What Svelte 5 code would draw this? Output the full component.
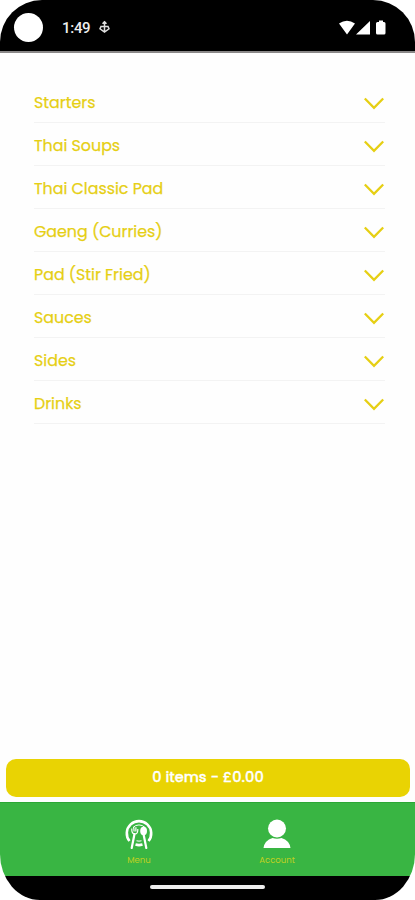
<script>
	const categories = [
		'Starters',
		'Thai Soups',
		'Thai Classic Pad',
		'Gaeng (Curries)',
		'Pad (Stir Fried)',
		'Sauces',
		'Sides',
		'Drinks'
	];

	let items = 0;
	let total = 0;
</script>

<style>
	:global(body) {
		background: #fff;
	}

	.phone {
		display: flex;
		flex-direction: column;
		box-sizing: border-box;
		width: 415px;
		height: 900px;
		overflow: hidden;
		border-radius: 42px 42px 40px 40px / 42px 42px 46px 46px;
		background: #fefefe;
		font-family: Poppins, Inter, sans-serif;
	}

	.status {
		display: flex;
		align-items: center;
		box-sizing: border-box;
		height: 53px;
		padding: 3px 28px 0 14px;
		border-bottom: 2px solid #8a8888;
		background: #000;
		color: #eee;
	}

	.camera {
		width: 29px;
		height: 29px;
		border-radius: 50%;
		background: #fff;
	}

	.time {
		width: 28px;
		margin: 2px 9px 0 19px;
		font: 500 15px Roboto, sans-serif;
		letter-spacing: -0.3px;
	}

	.signals {
		margin-left: auto;
	}

	svg {
		display: block;
	}

	ul {
		flex: 1;
		margin: 0;
		padding: 27px 30px 0 34px;
		list-style: none;
	}

	li {
		display: flex;
		align-items: center;
		justify-content: space-between;
		box-sizing: border-box;
		height: 43px;
		border-bottom: 1px solid #f3f3f3;
		color: #e6cf14;
		font-size: 15.85px;
		-webkit-text-stroke: 0.25px #e6cf14;
	}

	li span {
		padding-top: 2px;
	}

	li svg {
		margin: 5px 1px 0 0;
	}

	.basket {
		height: 38px;
		margin: 0 5px 5px 6px;
		padding: 0 0 1px;
		border: 0;
		border-radius: 10px;
		background: #e9d303;
		color: #fff;
		font: 500 14.6px Poppins, Inter, sans-serif;
		text-align: center;
		-webkit-text-stroke: 0.3px #fff;
	}

	nav {
		display: flex;
		box-sizing: border-box;
		height: 74px;
		padding: 16px 69px 0 70px;
		border-top: 1px solid #2ba735;
		background: #39b543;
		color: #bfd022;
		font-size: 8.5px;
	}

	.tab {
		display: flex;
		flex: 1;
		flex-direction: column;
		align-items: center;
	}

	.tab span {
		margin-top: 6px;
		line-height: 11px;
	}

	.gesture {
		display: flex;
		justify-content: center;
		height: 24px;
		background: #000;
	}

	.gesture i {
		width: 115px;
		height: 4px;
		margin-top: 9px;
		border-radius: 2px;
		background: #eee;
	}
</style>

<div class="phone">
	<div class="status">
		<div class="camera"></div>
		<div class="time">1:49</div>
		<svg width="11" height="14" viewBox="0 0 11 14" fill="none" stroke="#ddd" stroke-width="1.5">
			<path d="M5.5 1v11M3.5 3.7l2-2 2 2M2 6.5h7l1 2.3L5.5 12 1 8.8Z" />
		</svg>
		<svg class="signals" width="48" height="15" viewBox="0 0 48 15" fill="#fff">
			<path d="M0 3.5Q8-2 16 3.5L8 14.5ZM17 14.5 31 1v13.5ZM37 3.5q0-1.5 1.5-1.5h1.500V.5h4V2h1q1.5 0 1.5 1.5V13q0 1.5-1.5 1.5h-6.5Q37 14.5 37 13Z" />
		</svg>
	</div>

	<ul>
		{#each categories as category}
			<li>
				<span>{category}</span>
				<svg width="20" height="13" viewBox="0 0 20 13" fill="none" stroke="#e6cf14" stroke-width="2.3">
					<path d="M.8 1.5 10 10.8l9.2-9.3" />
				</svg>
			</li>
		{/each}
	</ul>

	<button class="basket">{items} items - £{total.toFixed(2)}</button>

	<nav>
		<div class="tab">
			<!-- plate with a fork and a spoon laid over it -->
			<svg width="28" height="30" viewBox="0 0 28 30" fill="none" stroke="#fff">
				<path d="M4.5 22A12.2 12.2 0 1 1 23.5 22" stroke-width="2.6" />
				<path d="M10.5 25.600q3.5 1 7 0" stroke-width="2.6" />
				<path d="M8 8.500A8.3 8.3 0 0 1 20 8.500M11.5 21.800q2.5.7 5 0" stroke-width="1" />
				<path d="M6.700 29 9.500 15M21.300 29 18.500 15" stroke-width="2.2" stroke-linecap="round" />
				<path d="M6.800 9.500q-.3 5.500 3 5.500t3-5M8.700 8l.4 4.500M10.900 8.200v4.300" stroke-width="1.2" />
				<ellipse cx="18.6" cy="12" rx="3.4" ry="4.200" fill="#fff" stroke="none" />
			</svg>
			<span>Menu</span>
		</div>
		<div class="tab">
			<svg width="28" height="30" viewBox="0 0 28 30" fill="#fff">
				<circle cx="14" cy="9.500" r="9" />
				<path d="M.5 29q1-7.500 9-10 4.500 1.500 9 0 8 2.500 9 10Z" />
			</svg>
			<span>Account</span>
		</div>
	</nav>

	<div class="gesture"><i></i></div>
</div>
